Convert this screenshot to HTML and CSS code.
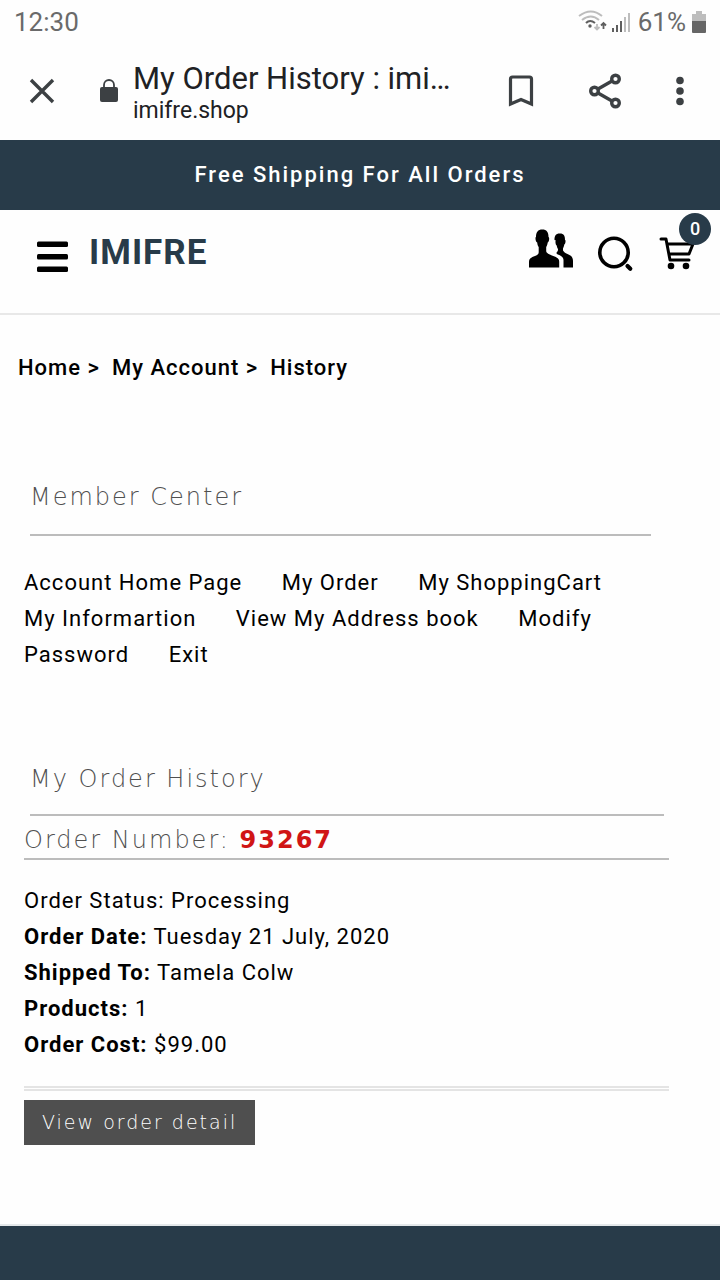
FILE: index.html
```html
<!DOCTYPE html>
<html lang="en">
<head>
<meta charset="utf-8">
<meta name="viewport" content="width=device-width, initial-scale=1">
<title>My Order History : imifre.shop</title>
<link rel="stylesheet" href="styles.css">
</head>
<body>
<div class="status-bar">
  <span class="clock">12:30</span>
  <div class="status-icons">
    <svg width="54" height="24" viewBox="0 0 54 24" fill="none" aria-hidden="true">
      <path d="M1 6Q13-3 24 6M4 10Q13 3 21 10" stroke="#bdbdbd" stroke-width="2"/>
      <path d="M8 13Q12 9 17 13" stroke="#5f5f5f" stroke-width="2"/>
      <circle cx="12" cy="16" r="1.700" fill="#5f5f5f"/>
      <path d="M19 14v5M16.500 17l2.500 2.500 2.500-2.500" stroke="#bdbdbd" stroke-width="1.800"/>
      <path d="M25.500 19v-6M23 15.500l2.500-2.500 2.500 2.500" stroke="#5f5f5f" stroke-width="1.800"/>
      <path d="M35 18v4M39 15v7M43 11v11" stroke="#5f5f5f" stroke-width="2"/>
      <path d="M47 7v15M51 3v19" stroke="#bdbdbd" stroke-width="2"/>
    </svg>
    <span>61%</span>
    <svg width="14" height="22" viewBox="0 0 14 22" aria-hidden="true">
      <path d="M4 0h6v3h4v8H0V3h4z" fill="#bdbdbd"/>
      <path d="M0 10h14v11q0 1-1 1H1q-1 0-1-1z" fill="#666"/>
    </svg>
  </div>
</div>

<div class="browser-bar">
  <button class="icon-button" type="button" aria-label="Close">
    <svg width="26" height="26" viewBox="0 0 26 26" aria-hidden="true"><path d="M2 2l22 22M24 2L2 24" stroke="#3c4043" stroke-width="3.4"/></svg>
  </button>
  <svg class="lock" width="20" height="24" viewBox="0 0 20 24" aria-hidden="true">
    <rect x="1" y="8" width="18" height="15" rx="2" fill="#3c4043"/>
    <path d="M5 9V6a5 5 0 0 1 10 0v3" fill="none" stroke="#3c4043" stroke-width="1.8"/>
  </svg>
  <div class="page-info">
    <div class="page-title">My Order History : imi…</div>
    <div class="page-host">imifre.shop</div>
  </div>
  <div class="browser-actions">
    <button class="icon-button" type="button" aria-label="Bookmark">
      <svg width="26" height="32" viewBox="0 0 26 32" aria-hidden="true"><path d="M2.500 29V4q0-2 2-2h17q2 0 2 2v25L13 24.500z" fill="none" stroke="#3c4043" stroke-width="3.200"/></svg>
    </button>
    <button class="icon-button" type="button" aria-label="Share">
      <svg width="34" height="36" viewBox="0 0 34 36" fill="none" stroke="#3c4043" stroke-width="3.400" aria-hidden="true"><path d="M10 16l14-8M10 20l14 8"/><circle cx="6.500" cy="18" r="3.800"/><circle cx="27.500" cy="6" r="3.800"/><circle cx="27.500" cy="30" r="3.800"/></svg>
    </button>
    <button class="icon-button" type="button" aria-label="More">
      <svg width="8" height="30" viewBox="0 0 8 30" fill="#3c4043" aria-hidden="true"><circle cx="4" cy="4.500" r="3.800"/><circle cx="4" cy="15" r="3.800"/><circle cx="4" cy="25.500" r="3.800"/></svg>
    </button>
  </div>
</div>

<div class="promo">Free Shipping For All Orders</div>

<header class="site-header">
  <button class="icon-button" type="button" aria-label="Menu">
    <svg width="32" height="32" viewBox="0 0 32 32" aria-hidden="true"><rect y=".500" width="31" height="5.500" rx="1.500"/><rect y="13" width="31" height="5.500" rx="1.500"/><rect y="25.500" width="31" height="5.500" rx="1.500"/></svg>
  </button>
  <a class="brand" href="#">IMIFRE</a>
  <div class="header-actions">
    <a href="#" aria-label="Account">
      <svg width="44" height="40" viewBox="0 0 44 40" aria-hidden="true">
        <path d="M25.500 11c0-4 1-6.500 5.300-6.500S36 7 36 11c1 0 .5 4-.7 4.500-.3 2-1 3-1.300 4v2c1 1.500 2 2.500 4.500 3.500 3.500 1.500 5.500 3 5.500 7v6.500h-9.500v-7.500c0-3-3-4.500-5.500-5.500-1.500-.7-2-1.500-1-2.500 1-1 1-2 1-3-.7-1-1-2-1.300-3.500-1.200-.5-1.700-5-.7-5z"/>
        <path d="M7 8c0-5 2-7.500 6.300-7.500S19.500 3 19.500 8c1.200 0 .7 5-.8 5.500-.3 2-.9 3.500-1.500 4.500v4c0 2 3 3.500 7 5s6 2.500 6 6v5.500H0V33c0-3.500 2-4.500 6-6s3.700-3 3.700-5v-4c-.8-1-1.300-2.500-1.500-4.500C6.500 13 6 8 7 8z"/>
      </svg>
    </a>
    <a href="#" aria-label="Search">
      <svg width="36" height="36" viewBox="0 0 36 36" fill="none" stroke="#000" aria-hidden="true"><circle cx="16" cy="16.500" r="14.200" stroke-width="3.600"/><path d="M29.500 30l2.800 2.800" stroke-width="4.200" stroke-linecap="round"/></svg>
    </a>
    <a class="cart" href="#" aria-label="Cart, 0 items">
      <svg width="36" height="34" viewBox="0 0 36 34" fill="none" stroke="#000" stroke-width="3" stroke-linecap="round" stroke-linejoin="round" aria-hidden="true"><path d="M2 3h5l4 21h19M8 8h26l-4 10H10"/><circle cx="12" cy="30" r="3.300" fill="#000" stroke="none"/><circle cx="27" cy="30" r="3.300" fill="#000" stroke="none"/></svg>
      <span class="cart-count">0</span>
    </a>
  </div>
</header>

<main class="content">
  <nav class="breadcrumb" aria-label="Breadcrumb">
    <a href="#">Home &gt;</a>
    <a href="#">My Account &gt;</a>
    <span>History</span>
  </nav>

  <section class="member">
    <h2 class="section-title">Member Center</h2>
    <nav class="member-links" aria-label="Member">
      <a href="#">Account Home Page</a>
      <a href="#">My Order</a>
      <a href="#">My ShoppingCart</a>
      <a href="#">My Informartion</a>
      <a href="#">View My Address book</a>
      <a href="#">Modify Password</a>
      <a href="#">Exit</a>
    </nav>
  </section>

  <section class="history">
    <h2 class="section-title history-title">My Order History</h2>
    <h3 class="order-number">Order Number: <strong>93267</strong></h3>
    <div class="order-info">
      <div>Order Status: Processing</div>
      <div><b>Order Date:</b> Tuesday 21 July, 2020</div>
      <div><b>Shipped To:</b> Tamela Colw</div>
      <div><b>Products:</b> 1</div>
      <div><b>Order Cost:</b> $99.00</div>
    </div>
    <button class="detail-button" type="button">View order detail</button>
  </section>
</main>
<footer class="site-footer"></footer>
</body>
</html>
```

FILE: styles.css
```css
* {
  box-sizing: border-box;
}

body {
  margin: 0;
  min-height: 100vh;
  display: flex;
  flex-direction: column;
  background: #fefefe;
  color: #000;
  font: 22px/36px Roboto, "Liberation Sans", sans-serif;
}

a {
  color: inherit;
  text-decoration: none;
}

svg {
  display: block;
}

h2,
h3 {
  margin: 0;
}

.icon-button {
  display: block;
  padding: 0;
  border: 0;
  background: none;
}

.status-bar {
  display: flex;
  justify-content: space-between;
  height: 44px;
  align-items: center;
  padding: 0 14px;
  color: #6a6a6a;
  font-size: 26px;
}

.status-icons {
  display: flex;
  align-items: center;
  gap: 6px;
}

.browser-bar {
  display: flex;
  align-items: center;
  height: 96px;
  padding: 0 36px 2px 29px;
  color: #202124;
}

.lock {
  margin: 0 14px 0 44px;
}

.page-info {
  flex: 1;
  padding-top: 4px;
  white-space: nowrap;
}

.page-title {
  font-size: 31px;
  line-height: 36px;
}

.page-host {
  font-size: 23px;
  line-height: 28px;
}

.browser-actions {
  display: flex;
  align-items: center;
  gap: 54px;
}

.promo {
  padding: 17px 0;
  background: #283b49;
  color: #fff;
  text-align: center;
  font-weight: 500;
  letter-spacing: 2px;
}

.site-header {
  display: flex;
  align-items: flex-start;
  height: 105px;
  padding: 18px 25px 0 37px;
  border-bottom: 2px solid #e8e8e8;
}

.site-header .icon-button {
  padding-top: 13px;
}

.brand {
  margin-left: 20px;
  padding-top: 7px;
  color: #283b49;
  font-size: 35px;
  font-weight: 700;
  letter-spacing: 1px;
}

.header-actions {
  display: flex;
  align-items: flex-start;
  gap: 25px;
  margin-left: auto;
}

.header-actions a {
  padding-top: 1px;
}

.header-actions a:not(:first-child) {
  padding-top: 8px;
}

.cart {
  position: relative;
}

.cart-count {
  position: absolute;
  top: -15px;
  right: -16px;
  width: 32px;
  border-radius: 50%;
  background: #283b49;
  color: #fff;
  font-size: 18px;
  font-weight: 500;
  line-height: 32px;
  text-align: center;
}

.content {
  flex: 1;
  padding: 35px 51px 79px 24px;
  letter-spacing: 1px;
}

.breadcrumb {
  display: flex;
  gap: 12px;
  margin-left: -6px;
  font-weight: 500;
}

.section-title,
.order-number {
  color: #505050;
  font-family: "DejaVu Sans", sans-serif;
  font-size: 24px;
  font-weight: 200;
  letter-spacing: 2px;
  border-bottom: 2px solid #bcbcbc;
}

.section-title {
  margin: 0 18px 0 6px;
  padding-bottom: 19px;
}

.member {
  margin-top: 93px;
}

.member-links {
  margin-top: 29px;
}

.member-links a {
  margin-right: 33px;
}

.history {
  margin-top: 88px;
}

.history-title {
  margin-right: 5px;
  padding-bottom: 17px;
}

.order-number {
  padding: 6px 0 0;
}

.order-number strong {
  color: #d01515;
  font-weight: 700;
}

.order-info {
  padding: 23px 0 23px;
  border-bottom: 5px double #e4e4e4;
}

.detail-button {
  margin-top: 9px;
  padding: 0 18px;
  border: 0;
  background: #4f4f4f;
  color: #fff;
  font: 200 19px/45px "DejaVu Sans", sans-serif;
  letter-spacing: 2px;
}

.site-footer {
  height: 56px;
  border-top: 2px solid #e4e8ea;
  background: #283b49;
}
```
